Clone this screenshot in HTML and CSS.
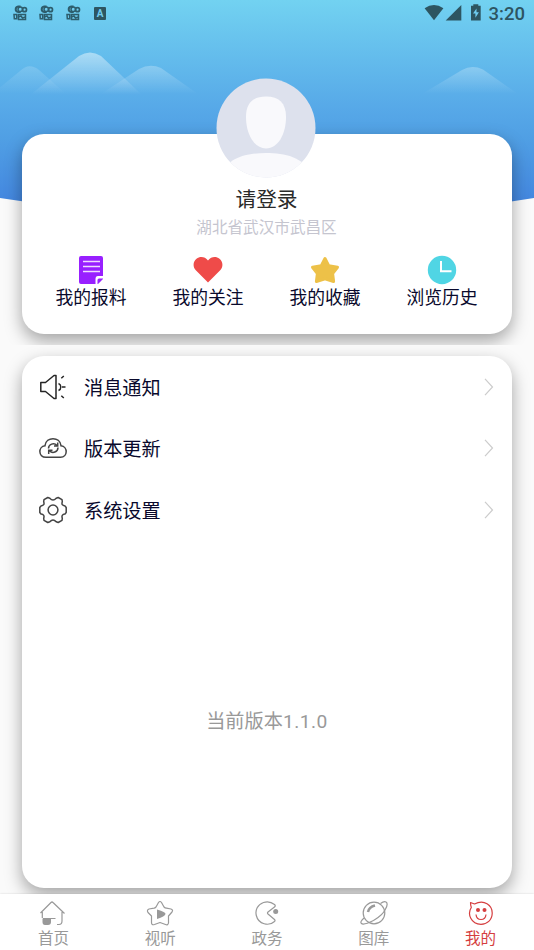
FILE: index.html
```html
<!DOCTYPE html>
<html lang="zh-CN">
<head>
<meta charset="utf-8">
<title>我的</title>
<link rel="stylesheet" href="styles.css">
</head>
<body>
<svg class="defs" width="0" height="0">
  <defs>
    <symbol id="camera" viewBox="0 0 15 16">
      <g fill="none" stroke="#2d5d6c">
        <path d="M7.600 1.600H5.200Q2.700 2 2.700 4.300T5.200 7h2.500" stroke-width="2"/>
        <circle cx="7.300" cy="4.300" r="2.300" stroke-width="1.500"/>
        <circle cx="11.500" cy="4.700" r="2" stroke-width="1.700"/>
        <path d="M1 9.600h2.700v4.200H1.300zM5.500 9.400h7v5h-7z" stroke-width="1.500"/>
        <path d="M5 12l3-1 1.500 2 3-1" stroke-width="1.500"/>
      </g>
    </symbol>
  </defs>
</svg>
<section class="profile">
  <svg class="hero" viewBox="0 0 534 220">
    <defs>
      <linearGradient id="sky" gradientUnits="userSpaceOnUse" x1="0" y1="0" x2="0" y2="214">
        <stop offset="0" stop-color="#72d2f1"/><stop offset=".5" stop-color="#57a9e8"/>
        <stop offset=".65" stop-color="#509fe4"/><stop offset=".95" stop-color="#4386df"/>
      </linearGradient>
      <linearGradient id="mist" x1="0" y1="0" x2="0" y2="1">
        <stop offset="0" stop-color="#fff" stop-opacity=".46"/><stop offset="1" stop-color="#fff" stop-opacity="0"/>
      </linearGradient>
      <linearGradient id="haze" x1="0" y1="0" x2="0" y2="1">
        <stop offset="0" stop-color="#fff" stop-opacity=".26"/><stop offset="1" stop-color="#fff" stop-opacity="0"/>
      </linearGradient>
    </defs>
    <path fill="url(#sky)" d="M0 0H534V198Q267 240 0 198Z"/>
    <path fill="url(#haze)" opacity=".6" d="M-8 94L20 71Q29 62 39 70L66 94Z"/>
    <path fill="url(#mist)" d="M30 95L79 56Q90 49 101 56L142 95Z"/>
    <path fill="url(#haze)" d="M101 94L139 69Q150 63 161 68L198 94Z"/>
    <path fill="url(#haze)" d="M422 94L462 70Q472 64.500 483 69.500L518 94Z"/>
  </svg>
  <header class="status">
    <div class="notices">
      <svg width="15" height="16"><use href="#camera"/></svg>
      <svg width="15" height="16"><use href="#camera"/></svg>
      <svg width="15" height="16"><use href="#camera"/></svg>
      <span class="badge">A</span>
    </div>
    <svg class="signals" width="58" height="18" viewBox="0 0 58 18" fill="#2d5561">
      <path d="M.6 4.300Q10 -2.500 19.400 4.300L10 16.300Z"/>
      <path d="M37.300 1V16.600H21.700Z"/>
      <path fill-rule="evenodd" d="M47 1.800h2.300V.3h5v1.500h2.400v14.800H47zM52.500 4.500L49 9.600h2.400v4.200l3.500-5.500h-2.400z"/>
    </svg>
    <time>3:20</time>
  </header>
  <div class="card login">
    <svg class="avatar" viewBox="0 0 100 100">
      <defs><clipPath id="disc"><circle cx="50" cy="50" r="49.500"/></clipPath></defs>
      <g clip-path="url(#disc)"><path fill="#dde1ed" d="M0 0H100V100H0z"/>
      <path fill="#f9f9fc" d="M50 18.500C63 18.500 70 25 70 39C70 56 62 70.500 50 70.500S30 56 30 39C30 25 37 18.500 50 18.500Z"/>
      <path fill="#f9f9fc" d="M6 96C12 79 31 75 50 75S88 79 94 96V100H6Z"/></g>
    </svg>
    <h1>请登录</h1>
    <p class="place">湖北省武汉市武昌区</p>
    <div class="actions">
      <a><svg width="30" height="30" viewBox="0 0 30 30"><path fill="#9820ff" d="M5 1H25Q27 1 27 3V21H22Q19.500 21 19.500 24V29H5Q3 29 3 27V3Q3 1 5 1ZM27 23.500V24L22 29H21.500V25Q21.500 23.500 23 23.500Z"/><path stroke="#f0dcff" stroke-width="1.400" d="M7 6.500H24M7 11.500H24M7 16.500H24"/></svg>我的报料</a>
      <a><svg width="30" height="30" viewBox="0 0 30 30"><path fill="#ef4b49" d="M15 27.500L2.800 15.300C-.5 11.500 0 6.500 3.500 3.700C7 1 12 1.500 15 5.500C18 1.500 23 1 26.500 3.700C30 6.500 30.500 11.500 27.200 15.300Z"/></svg>我的关注</a>
      <a><svg width="30" height="30" viewBox="0 0 30 30"><path fill="#edc148" stroke="#edc148" stroke-width="3" stroke-linejoin="round" d="M15 3.500L18.700 10.700L27.500 12.300L22.600 18.500L23.600 26.500L15 23.800L6.400 26.500L7.400 18.500L2.500 12.300L11.300 10.700Z"/></svg>我的收藏</a>
      <a><svg width="30" height="30" viewBox="0 0 30 30"><circle cx="15" cy="15" r="14.200" fill="#50d5e4"/><path d="M14 6V16.300H24.500" fill="none" stroke="#fff" stroke-width="2"/></svg>浏览历史</a>
    </div>
  </div>
</section>
<main>
  <div class="card menu">
    <a class="row"><svg class="icon" viewBox="0 0 30 28" fill="none" stroke="#252525" stroke-width="1.500" stroke-linejoin="round"><path d="M1.800 9.500H6.500L15 2.500H17V25.500H15L6.500 18.500H1.800ZM19.500 10.500A3.800 3.800 0 0 1 19.500 17.500M23 14H26.500M22.300 5.300L24.800 3M22.300 22.700L24.800 25"/></svg><span>消息通知</span><svg class="chev" viewBox="0 0 10 18"><path d="M1 .8L8.500 9L1 17.200"/></svg></a>
    <a class="row"><svg class="icon" viewBox="0 0 30 28" fill="none" stroke="#444" stroke-width="1.500"><path d="M7 23.300C-1 23.300-1 12.500 6 11.700C7 2.300 21 2.300 22 11.700C29 12.500 29 23.300 21.500 23.300Z"/><path d="M9.500 14.500C9.500 10 15 8.300 18 11.500M18.700 8.500V12H15M19 13.500C19 18 13.500 20 10.500 16.700M9.700 20V16.300H13.500"/></svg><span>版本更新</span><svg class="chev" viewBox="0 0 10 18"><path d="M1 .8L8.500 9L1 17.200"/></svg></a>
    <a class="row"><svg class="icon" viewBox="0 0 30 28" fill="none" stroke="#444" stroke-width="1.500" stroke-linejoin="round"><path d="M8.800 1.500L10.800 2.200Q14 5.800 17.200 2.200L19.200 1.500L23 3.700L23.300 5.700Q22 9.600 26 10L27.200 11.500V16.500L26 18Q22 18.400 23.300 22.300L23 24.300L19.200 26.500L17.200 25.800Q14 22.200 10.800 25.800L8.800 26.500L5 24.300L4.700 22.300Q6 18.400 2 18L.8 16.500V11.500L2 10Q6 9.600 4.700 5.700L5 3.700Z"/><circle cx="14" cy="14" r="4.900"/></svg><span>系统设置</span><svg class="chev" viewBox="0 0 10 18"><path d="M1 .8L8.500 9L1 17.200"/></svg></a>
    <p class="version">当前版本<span>1.1.0</span></p>
  </div>
</main>
<nav>
  <a><svg viewBox="0 0 28 26"><path d="M1.500 13L12 2.500Q13 1.500 14 2.500L25.500 13.500M3.300 12V18M23 12V21Q23 24.500 20 24.500H18M4 18.500H16.500"/><path class="solid" d="M3.500 18.500H12V22Q12 25 9 25H6Q3.500 25 3.500 22Z"/></svg>首页</a>
  <a><svg viewBox="0 0 28 26"><path d="M12.500 2.500Q14 .5 15.500 2.500L18 7Q19 8 20.500 8.200L25 9Q27.500 10 26 12L22.500 16V23Q22 25.500 19.500 24.500L14 22.500L8.500 24.500Q5.500 25.500 5.500 22.500V16L2 12.500Q.5 10 3 9L8 8.200Q9 8 10 7Z"/><path class="solid" d="M11 9.500Q20 12 19.500 14Q19 16.500 11 19Z"/></svg>视听</a>
  <a><svg viewBox="0 0 28 26"><path d="M21.500 4.500Q16.500.5 10.500 2.500C4.500 4.500 2 10 3.300 15.500C5.500 24.500 16 26.500 21.500 21.500Q22.500 20.500 21.500 19.500L15 14Q14 13 15 12L21.500 7Q23 5.800 21.500 4.500Z"/><circle class="solid" cx="22.700" cy="11.500" r="2.500"/></svg>政务</a>
  <a><svg viewBox="0 0 28 26"><circle cx="14" cy="13" r="10.800"/><path d="M4 18Q-.5 22 1.500 23.500Q3.500 25.500 13.500 20.500Q23 15 25.500 9Q28.500 3.500 26 2Q24 1 20.500 3.500"/><path d="M8 12Q9 7 15 5.500" stroke-width="2.500"/></svg>图库</a>
  <a class="active"><svg viewBox="0 0 28 26"><path d="M3.500 2.500L7.500 4C17-1 25.500 5 25.200 13.500C25 20 20 24.300 14 24.300C4 24.300 0 14 4.300 7.500Q3.500 5 3.500 2.500ZM9 14.500Q9.500 19.500 14 19.500T19 14.500"/><circle class="solid" cx="11" cy="10" r="2"/><circle class="solid" cx="17.500" cy="10" r="2"/></svg>我的</a>
</nav>
</body>
</html>
```
FILE: styles.css
```css
* { box-sizing: border-box; margin: 0; padding: 0; }
body {
  width: 534px;
  height: 950px;
  overflow: hidden;
  display: flex;
  flex-direction: column;
  background: #fafafa;
  font-family: "Noto Sans CJK SC", sans-serif;
  color: #09092c;
}
svg { display: block; }
.defs { position: absolute; }
.profile { position: relative; height: 345px; flex: none; overflow: hidden; }
.hero { position: absolute; top: 0; left: 0; width: 534px; height: 220px; }
.status {
  position: relative;
  height: 26px;
  display: flex;
  align-items: center;
  padding: 0 9px 0 12.500px;
  color: #2d5561;
}
.notices { display: flex; align-items: center; gap: 11.700px; flex: 1; }
.badge {
  width: 12px;
  height: 13px;
  margin-left: 1.500px;
  border-radius: 1px;
  background: #2d5561;
  color: #72cbed;
  font: bold 10px/13px Roboto, sans-serif;
  text-align: center;
}
.signals { margin-right: 7px; }
time { font: 500 18.500px/26px Roboto, sans-serif; padding-top: 1px; }
.card {
  margin: 0 22px;
  border-radius: 22px;
  background: #fff;
  box-shadow: 0 7px 17px rgba(0, 0, 0, .35);
}
.login {
  position: relative;
  height: 200.500px;
  margin-top: 107.500px;
  padding-top: 49px;
  text-align: center;
}
.avatar { position: absolute; width: 100px; height: 100px; left: 194px; top: -56px; }
h1 { font-size: 20.700px; line-height: 30px; font-weight: 400; color: #2a2a2a; margin-left: -1px; }
.place { font-size: 15.600px; line-height: 24px; color: #c5c5cf; margin: 1px 0 0 -1px; }
.actions { display: grid; grid-template-columns: repeat(4, 117px); justify-content: center; margin: 17px 0 0 -1px; }
.actions a { display: flex; flex-direction: column; align-items: center; font-size: 17.800px; line-height: 23px; }
main { height: 549px; flex: none; padding-top: 11px; overflow: hidden; }
.menu { height: 532px; }
.row { display: flex; align-items: center; height: 61.600px; padding: 0 18px 0 17px; }
.icon { width: 30px; height: 28px; }
.row span { flex: 1; margin-left: 15px; font-size: 19.200px; line-height: 28px; }
.chev { width: 10px; height: 18px; fill: none; stroke: #ccc; stroke-width: 1.200; }
.version { margin-top: 165px; text-align: center; font-size: 19.200px; line-height: 28px; color: #999; }
.version span { font-family: Roboto, sans-serif; letter-spacing: .5px; }
nav {
  position: relative;
  height: 56px;
  display: grid;
  grid-template-columns: repeat(5, 1fr);
  background: #fff;
  box-shadow: 0 0 2px rgba(0, 0, 0, .15);
}
nav a { display: flex; flex-direction: column; align-items: center; padding-top: 6px; font-size: 15.500px; line-height: 23px; color: #999; }
nav svg { width: 28px; height: 26px; fill: none; stroke: currentColor; stroke-width: 1.200; stroke-linejoin: round; }
nav .solid { fill: currentColor; stroke: none; }
nav .active { color: #d53e3f; }
```
